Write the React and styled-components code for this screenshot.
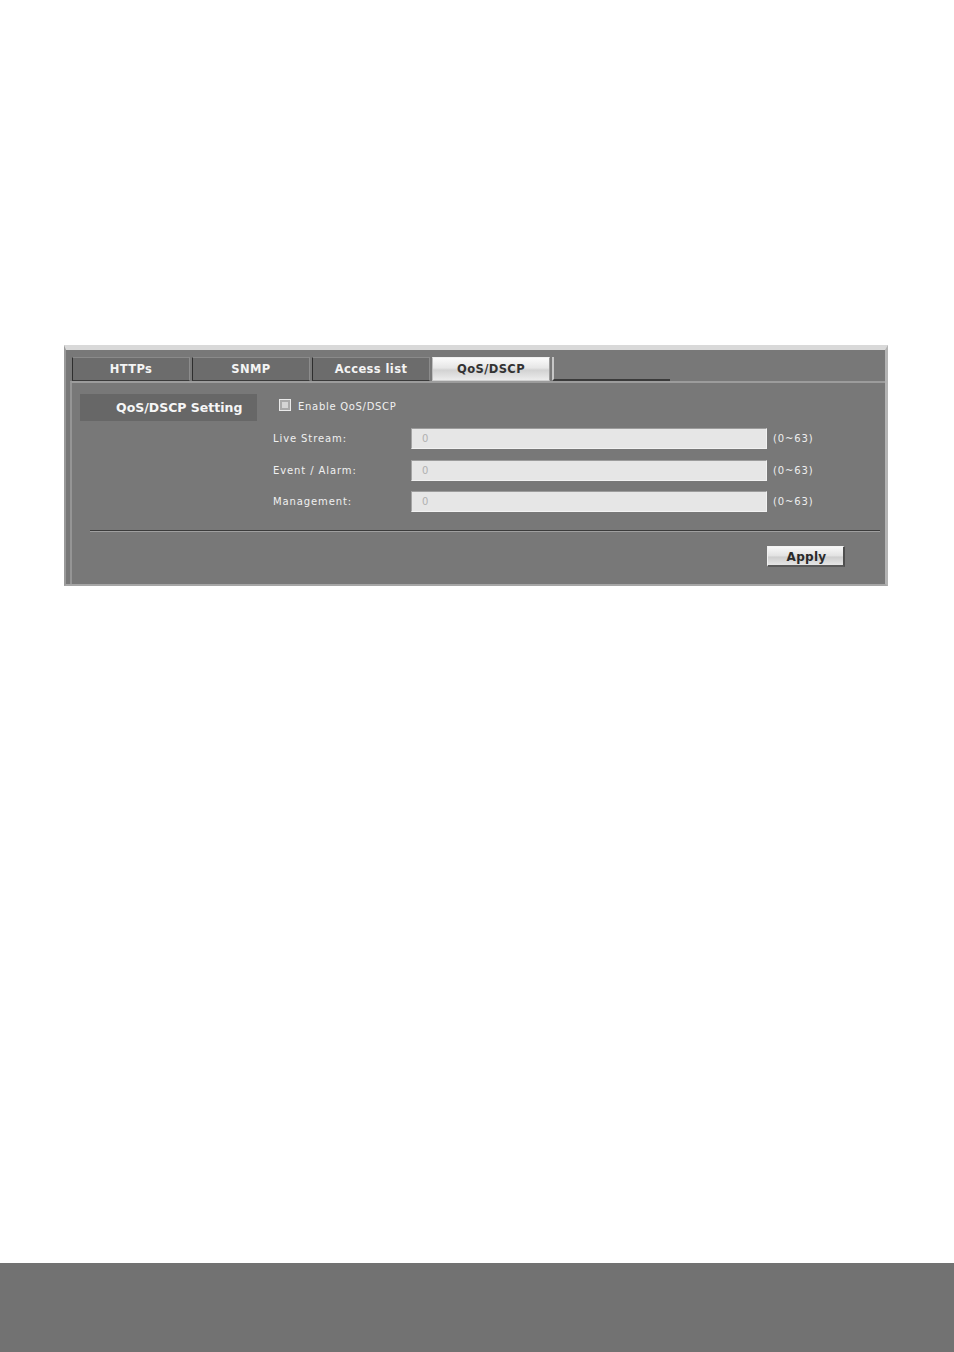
import React from "react";
import styled, { createGlobalStyle } from "styled-components";

const Global = createGlobalStyle`
  html, body { margin: 0; padding: 0; background: #fff; }
  body { font-family: "DejaVu Sans", Verdana, sans-serif; }
  * { box-sizing: border-box; }
`;

const Page = styled.div`
  min-height: 1352px;
  display: flex;
  flex-direction: column;
`;

const Frame = styled.section`
  margin: 345px 0 0 64px;
  width: 824px;
  height: 241px;
  background: #787878;
  border-top: 5px solid #d9d9d9;
  border-left: 2px solid #9a9a9a;
  border-right: 3px solid #b4b4b4;
  border-bottom: 2px solid #a6a6a6;
  display: flex;
  flex-direction: column;
`;

const TabRow = styled.div`
  display: flex;
  gap: 2px;
  padding: 7px 0 0 6px;
  height: 31px;
`;

const Tab = styled.div`
  width: 118px;
  height: 24px;
  display: flex;
  align-items: center;
  justify-content: center;
  font-size: 11.5px;
  letter-spacing: 0.4px;
  font-weight: bold;
  color: ${(p) => (p.$active ? "#333" : "#f4f4f4")};
  background: ${(p) =>
    p.$active
      ? "linear-gradient(#fbfbfb 0%, #e6e6e6 45%, #d2d2d2 55%, #ececec 100%)"
      : "#6c6c6c"};
  border-left: 1px solid ${(p) => (p.$active ? "#bdbdbd" : "#2e2e2e")};
  border-top: 1px solid ${(p) => (p.$active ? "#f0f0f0" : "#8a8a8a")};
  border-right: 1px solid ${(p) => (p.$active ? "#9a9a9a" : "#8c8c8c")};
  border-bottom: 1px solid ${(p) => (p.$active ? "#cfcfcf" : "#3a3a3a")};
`;

const TabFiller = styled.div`
  width: 118px;
  height: 24px;
  border-left: 2px solid #c6c6c6;
  border-bottom: 2px solid #3a3a3a;
`;

const Content = styled.div`
  flex: 1;
  margin-left: 4px;
  border-left: 2px solid #959595;
  border-top: 2px solid #9c9c9c;
  display: flex;
  flex-direction: column;
`;

const SettingRow = styled.div`
  display: flex;
  align-items: center;
  gap: 22px;
  margin-top: 11px;
  padding-left: 8px;
`;

const SettingLabel = styled.div`
  width: 177px;
  height: 27px;
  background: #676767;
  color: #f6f6f6;
  font-size: 12.5px;
  font-weight: bold;
  display: flex;
  align-items: center;
  padding-left: 36px;
`;

const CheckLine = styled.label`
  display: flex;
  align-items: center;
  gap: 7px;
  font-size: 10px;
  letter-spacing: 0.7px;
  color: #f0f0f0;
  margin-top: -3px;
`;

const Box = styled.span`
  width: 12px;
  height: 12px;
  margin-top: -2px;
  background: #d4d4d4;
  border: 1px solid #eaeaea;
  box-shadow: inset 0 0 0 2px #a9a9a9;
`;

const Fields = styled.div`
  display: grid;
  grid-template-columns: 132px 356px auto;
  column-gap: 6px;
  row-gap: 10.5px;
  align-items: center;
  margin-top: 7px;
  padding-left: 201px;
`;

const FieldLabel = styled.div`
  font-size: 10px;
  color: #f0f0f0;
  letter-spacing: 0.9px;
`;

const Input = styled.div`
  height: 21px;
  background: #e6e6e6;
  border-top: 1px solid #9c9c9c;
  border-left: 1px solid #a4a4a4;
  border-bottom: 1px solid #f2f2f2;
  border-right: 1px solid #f2f2f2;
  font-size: 10px;
  color: #b0b0b0;
  display: flex;
  align-items: center;
  padding-left: 10px;
`;

const Range = styled.div`
  font-size: 10px;
  color: #eeeeee;
  letter-spacing: 0.9px;
`;

const Divider = styled.div`
  margin: 18px 5px 0 18px;
  height: 2px;
  border-top: 1px solid #3c3c3c;
  border-bottom: 1px solid #a0a0a0;
`;

const ButtonRow = styled.div`
  display: flex;
  justify-content: flex-end;
  padding-right: 40px;
  margin-top: 14px;
`;

const Button = styled.button`
  width: 78px;
  height: 21px;
  font-family: "DejaVu Sans", Verdana, sans-serif;
  font-size: 12px;
  letter-spacing: 0.3px;
  font-weight: bold;
  color: #2a2a2a;
  background: linear-gradient(#f8f8f8 0%, #e2e2e2 50%, #cdcdcd 55%, #e6e6e6 100%);
  border-top: 1px solid #f4f4f4;
  border-left: 1px solid #f0f0f0;
  border-right: 2px solid #4e4e4e;
  border-bottom: 2px solid #5a5a5a;
  padding: 2px 0 0 2px;
`;

const Footer = styled.footer`
  margin-top: auto;
  height: 89px;
  background: #727272;
`;

const rows = [
  { label: "Live Stream:" },
  { label: "Event / Alarm:" },
  { label: "Management:" },
];

export default function App() {
  return (
    <Page>
      <Global />
      <Frame>
        <TabRow>
          <Tab>HTTPs</Tab>
          <Tab>SNMP</Tab>
          <Tab>Access list</Tab>
          <Tab $active>QoS/DSCP</Tab>
          <TabFiller />
        </TabRow>
        <Content>
          <SettingRow>
            <SettingLabel>QoS/DSCP Setting</SettingLabel>
            <CheckLine>
              <Box />
              Enable QoS/DSCP
            </CheckLine>
          </SettingRow>
          <Fields>
            {rows.map((r) => (
              <React.Fragment key={r.label}>
                <FieldLabel>{r.label}</FieldLabel>
                <Input>0</Input>
                <Range>(0~63)</Range>
              </React.Fragment>
            ))}
          </Fields>
          <Divider />
          <ButtonRow>
            <Button>Apply</Button>
          </ButtonRow>
        </Content>
      </Frame>
      <Footer />
    </Page>
  );
}
